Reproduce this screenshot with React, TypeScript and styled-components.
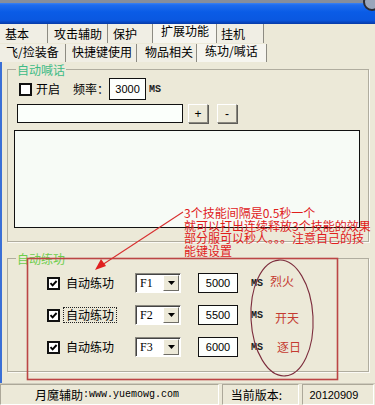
import React from "react";
import styled, { createGlobalStyle } from "styled-components";

const GlobalStyle = createGlobalStyle`
  html, body {
    margin: 0;
    padding: 0;
    background: #ece9d8;
  }

  body {
    font-family: "Noto Sans CJK SC", "Noto Sans", sans-serif;
    font-size: 12px;
    color: #000;
  }
`;

type TabDef = { label: string; w: number; pl: number; active?: boolean };

const row1: TabDef[] = [
    { label: "基本", w: 48, pl: 5 },
    { label: "攻击辅助", w: 60, pl: 6 },
    { label: "保护", w: 45, pl: 5 },
    { label: "扩展功能", w: 64, pl: 8, active: true },
    { label: "挂机", w: 47, pl: 4 },
];

const row2: TabDef[] = [
    { label: "飞/捡装备", w: 66, pl: 6 },
    { label: "快捷键使用", w: 71, pl: 6 },
    { label: "物品相关", w: 60, pl: 8 },
    { label: "练功/喊话", w: 70, pl: 8, active: true },
];

const skills = [
    { key: "F1", ms: "5000", note: "烈火", ml: 7, mt: -4 },
    { key: "F2", ms: "5500", note: "开天", ml: 12, mt: 6, focused: true },
    { key: "F3", ms: "6000", note: "逐日", ml: 14, mt: 0 },
];

const noteLines = [
    "3个技能间隔是0.5秒一个",
    "就可以打出连续释放3个技能的效果",
    "部分服可以秒人。。。注意自己的技",
    "能键设置",
];

const Check: React.FC<{ checked?: boolean }> = ({ checked }) => (
    <CheckBox>
        {checked && (
            <svg width="9" height="9" viewBox="0 0 9 9">
                <path d="M1.5 4.2 L3.6 6.4 L7.6 2" fill="none" stroke="#000" strokeWidth="1.9" />
            </svg>
        )}
    </CheckBox>
);

const App: React.FC = () => {
    return (
        <>
            <GlobalStyle />
            <Window>
                <TitleBar>
                    <CloseEdge />
                </TitleBar>

                <TabStrip>
                    {[row1, row2].map((row, i) => (
                        <TabRow key={i} $second={i === 1}>
                            {row.map((t) => (
                                <Tab key={t.label} $w={t.w} $pl={t.pl} $active={t.active} $second={i === 1}>
                                    {t.label}
                                </Tab>
                            ))}
                        </TabRow>
                    ))}
                </TabStrip>

                <Page>
                    <Group>
                        <Legend $color="#3dbb86">自动喊话</Legend>
                        <TopRow>
                            <Check />
                            <Caption>开启</Caption>
                            <Caption $ml={13}>频率：</Caption>
                            <NumBox $w={37} $h={22}>3000</NumBox>
                            <Unit>MS</Unit>
                        </TopRow>
                        <InputRow>
                            <TextInput />
                            <SmallButton $ml={5}>+</SmallButton>
                            <SmallButton $ml={9}>-</SmallButton>
                        </InputRow>
                        <TextArea />
                    </Group>

                    <Group $gap>
                        <Legend $color="#6ccd4c">自动练功</Legend>
                        <SkillList>
                            {skills.map((s) => (
                                <SkillRow key={s.key}>
                                    <Check checked />
                                    <SkillLabel $focused={s.focused}>自动练功</SkillLabel>
                                    <Select>
                                        <SelectText>{s.key}</SelectText>
                                        <SelectButton>
                                            <svg width="7" height="4" viewBox="0 0 7 4">
                                                <path d="M0 0 H7 L3.5 4 Z" fill="#000" />
                                            </svg>
                                        </SelectButton>
                                    </Select>
                                    <NumBox $w={40} $h={20} $ml={17}>
                                        {s.ms}
                                    </NumBox>
                                    <Unit $ml={13}>MS</Unit>
                                    <SkillNote $ml={s.ml} $mt={s.mt}>
                                        {s.note}
                                    </SkillNote>
                                </SkillRow>
                            ))}
                        </SkillList>
                    </Group>
                </Page>

                <StatusBar>
                    <StatusPanel $w={220} $pl={34}>
                        月魔辅助<Mono>:www.yuemowg.com</Mono>
                    </StatusPanel>
                    <StatusPanel $w={78} $pl={8}>
                        当前版本:
                    </StatusPanel>
                    <StatusPanel $w={72} $pl={6}>
                        <Digits>20120909</Digits>
                    </StatusPanel>
                </StatusBar>

                <Marks width="375" height="405" viewBox="0 0 375 405">
                    <rect x="27.5" y="258.5" width="310" height="121" fill="none" stroke="#bb4545" strokeWidth="1.6" />
                    <ellipse cx="282" cy="318" rx="31" ry="58" fill="none" stroke="#7c2c3c" strokeWidth="1.1" transform="rotate(-3 282 318)" />
                    <line x1="183" y1="212" x2="102" y2="265" stroke="#d83030" strokeWidth="1.1" />
                    <path d="M95 270 L101 259 L106 266 Z" fill="#e02020" />
                </Marks>

                <Note>
                    {noteLines.map((l) => (
                        <NoteLine key={l}>{l}</NoteLine>
                    ))}
                </Note>
            </Window>
        </>
    );
};

const Window = styled.div`
    position: relative;
    width: 375px;
    height: 405px;
    overflow: hidden;
    display: flex;
    flex-direction: column;
    background: #ece9d8;
`;

const TitleBar = styled.div`
    position: relative;
    height: 24px;
    flex: none;
    background: linear-gradient(
        to bottom,
        #868e9c 0,
        #868e9c 3px,
        #3b82f2 3px,
        #1e6cee 5px,
        #0a5ce6 12px,
        #0a58e0 20px,
        #0848c4 22px,
        #063aa6 24px
    );
`;

const CloseEdge = styled.div`
    position: absolute;
    top: -7px;
    right: -6px;
    width: 14px;
    height: 14px;
    border-radius: 50%;
    border: 2px solid #2b2b33;
    background: #9aa6bb;
`;

const TabStrip = styled.div`
    display: flex;
    flex-direction: column;
    flex: none;
`;

const TabRow = styled.div<{ $second?: boolean }>`
    display: flex;
    height: 19px;
    padding-top: ${(p) => (p.$second ? "1px" : "0")};
    box-sizing: border-box;
`;

const Tab = styled.div<{ $w: number; $pl: number; $active?: boolean; $second?: boolean }>`
    width: ${(p) => p.$w}px;
    box-sizing: border-box;
    padding-left: ${(p) => p.$pl}px;
    padding-top: ${(p) => (p.$active ? 0 : p.$second ? 1 : 3)}px;
    line-height: 14px;
    white-space: nowrap;
    background: ${(p) => (p.$active ? "#f6f5ef" : "#f0eee4")};
    border-right: 1px solid #8d8b82;
`;

const Page = styled.div`
    flex: 1;
    display: flex;
    flex-direction: column;
    border-left: 2px solid #3a6fd6;
    padding: 7px 6px 0 5px;
`;

const Group = styled.div<{ $gap?: boolean }>`
    position: relative;
    margin-top: ${(p) => (p.$gap ? "16px" : "0")};
    border: 1px solid #b0ad9f;
    box-shadow: 1px 1px 0 #fbfaf5;
    padding: 8px 0 13px 0;
`;

const Legend = styled.span<{ $color: string }>`
    position: absolute;
    top: -7px;
    left: 8px;
    padding: 0 1px;
    line-height: 13px;
    background: #ece9d8;
    color: ${(p) => p.$color};
`;

const TopRow = styled.div`
    display: flex;
    align-items: center;
    height: 22px;
    padding-left: 11px;
`;

const CheckBox = styled.span`
    width: 13px;
    height: 13px;
    box-sizing: border-box;
    border: 2px solid #111;
    background: #fff;
    display: flex;
    align-items: center;
    justify-content: center;
    flex: none;
`;

const Caption = styled.span<{ $ml?: number }>`
    margin-left: ${(p) => p.$ml ?? 4}px;
    line-height: 14px;
    white-space: nowrap;
`;

const NumBox = styled.div<{ $w: number; $h: number; $ml?: number }>`
    width: ${(p) => p.$w}px;
    height: ${(p) => p.$h}px;
    margin-left: ${(p) => p.$ml ?? 0}px;
    box-sizing: border-box;
    border: 1px solid #111;
    background: #fdfffd;
    display: flex;
    align-items: center;
    justify-content: center;
    font-family: "Liberation Sans", Arial, sans-serif;
    font-size: 11px;
    flex: none;
`;

const Unit = styled.span<{ $ml?: number }>`
    margin-left: ${(p) => p.$ml ?? 3}px;
    font-family: "Liberation Mono", monospace;
    font-size: 10px;
    font-weight: bold;
    color: #222;
`;

const InputRow = styled.div`
    display: flex;
    margin-top: 4px;
    height: 20px;
    padding-left: 9px;
`;

const TextInput = styled.div`
    width: 166px;
    height: 19px;
    box-sizing: border-box;
    border: 1px solid #111;
    background: #fbfffb;
`;

const SmallButton = styled.div<{ $ml: number }>`
    width: 20px;
    height: 19px;
    margin-left: ${(p) => p.$ml}px;
    box-sizing: border-box;
    border-top: 1px solid #fff;
    border-left: 1px solid #fff;
    border-right: 1px solid #8a887f;
    border-bottom: 1px solid #8a887f;
    box-shadow: 1px 1px 0 #5e5d58;
    background: #ece9d8;
    display: flex;
    align-items: center;
    justify-content: center;
    font-family: "Liberation Sans", Arial, sans-serif;
    font-size: 12px;
    line-height: 1;
`;

const TextArea = styled.div`
    margin: 6px 0 0 6px;
    width: 346px;
    height: 98px;
    box-sizing: border-box;
    border: 1px solid #111;
    background: #f7fbf6;
`;

const SkillList = styled.div`
    display: flex;
    flex-direction: column;
    gap: 12px;
    padding: 6px 0 1px 39px;
`;

const SkillRow = styled.div`
    display: flex;
    align-items: center;
    height: 20px;
`;

const SkillLabel = styled.span<{ $focused?: boolean }>`
    margin-left: 3px;
    padding: 0 2px;
    line-height: 14px;
    border: 1px dotted ${(p) => (p.$focused ? "#222" : "transparent")};
    white-space: nowrap;
`;

const Select = styled.div`
    margin-left: 18px;
    width: 46px;
    height: 20px;
    box-sizing: border-box;
    border-top: 1px solid #8a887f;
    border-left: 1px solid #8a887f;
    border-right: 1px solid #fff;
    border-bottom: 1px solid #fff;
    box-shadow: inset 1px 1px 0 #444;
    background: #fff;
    display: flex;
    align-items: center;
    padding: 1px 1px 1px 0;
`;

const SelectText = styled.span`
    flex: 1;
    padding-left: 4px;
    font-family: "Liberation Serif", serif;
    font-size: 12px;
`;

const SelectButton = styled.div`
    width: 16px;
    height: 16px;
    box-sizing: border-box;
    border-top: 1px solid #fff;
    border-left: 1px solid #fff;
    border-right: 1px solid #6e6d66;
    border-bottom: 1px solid #6e6d66;
    background: #ece9d8;
    display: flex;
    align-items: center;
    justify-content: center;
`;

const SkillNote = styled.span<{ $ml: number; $mt: number }>`
    margin-left: ${(p) => p.$ml}px;
    margin-top: ${(p) => p.$mt}px;
    color: #c43a30;
    line-height: 14px;
`;

const StatusBar = styled.div`
    flex: none;
    height: 22px;
    display: flex;
    gap: 2px;
    border-top: 1px solid #cfccbd;
    box-sizing: border-box;
`;

const StatusPanel = styled.div<{ $w: number; $pl: number }>`
    width: ${(p) => p.$w}px;
    margin-right: 1px;
    box-sizing: border-box;
    padding-left: ${(p) => p.$pl}px;
    border-top: 1px solid #aca899;
    border-left: 1px solid #aca899;
    border-bottom: 1px solid #fff;
    border-right: 1px solid #fff;
    display: flex;
    align-items: center;
    white-space: nowrap;
`;

const Mono = styled.span`
    font-family: "Liberation Mono", monospace;
    font-size: 10px;
`;

const Digits = styled.span`
    font-family: "Liberation Sans", Arial, sans-serif;
    font-size: 11px;
`;

const Marks = styled.svg`
    position: absolute;
    left: 0;
    top: 0;
    pointer-events: none;
`;

const Note = styled.div`
    position: absolute;
    left: 184px;
    top: 207px;
    color: #e0201c;
    font-size: 12px;
    white-space: nowrap;
`;

const NoteLine = styled.div`
    height: 12.5px;
    line-height: 12.5px;
    overflow: visible;
`;

export default App;
